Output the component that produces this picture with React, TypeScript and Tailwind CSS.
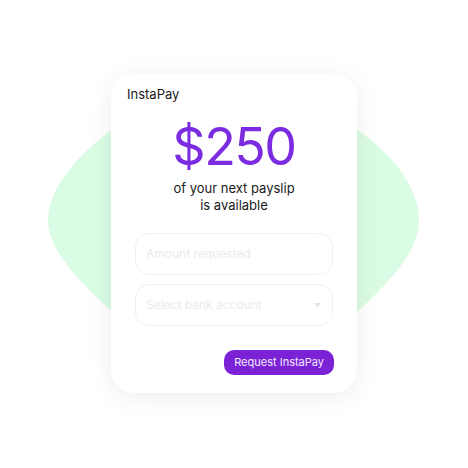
function Blob() {
  return (
    <svg className="absolute inset-0" width="468" height="468" viewBox="0 0 468 468" aria-hidden>
      <path
        d="M110 131 L356 129 C395 155 419 190 419 220 C419 250 392 280 356 313 L110 310 C80 282 48 250 48 220 C48 192 72 160 110 131 Z"
        fill="#dafbe4"
      />
    </svg>
  );
}

function Field({ placeholder, select = false }: { placeholder: string; select?: boolean }) {
  return (
    <div className="flex h-[42px] items-center justify-between rounded-[14px] border border-[#f1f1f1] bg-white pl-[10px] pr-[11px]">
      <span className="text-[12px] text-[#ebebeb]">{placeholder}</span>
      {select ? (
        <svg width="7" height="4" viewBox="0 0 8 5" aria-hidden>
          <path d="M0 0 L8 0 L4 5 Z" fill="#e2e2e2" />
        </svg>
      ) : null}
    </div>
  );
}

export default function App() {
  return (
    <div
      className="relative h-[468px] w-[468px] overflow-hidden bg-white"
      style={{ fontFamily: 'Inter, "Noto Sans", sans-serif' }}
    >
      <Blob />
      <div className="relative flex justify-center pt-[73px]">
        <div className="flex h-[320px] w-[246px] flex-col rounded-[24px] bg-white px-[16px] pt-[11px] shadow-[0_4px_26px_rgba(0,0,0,0.07)]">
          <p className="text-[13px] leading-[20px] text-[#1a1a1a]">InstaPay</p>
          <p className="mt-[17px] text-center text-[52px] leading-none tracking-[-0.03em] text-[#7b2be0]">$250</p>
          <p className="mt-[7px] text-center text-[13px] leading-[17px] text-[#1a1a1a]">
            of your next payslip
            <br />
            is available
          </p>
          <div className="mt-[19px] flex flex-col gap-[9px] px-[8px]">
            <Field placeholder="Amount requested" />
            <Field placeholder="Select bank account" select />
          </div>
          <div className="mt-[24px] flex justify-end pr-[7px]">
            <button className="h-[25px] rounded-[10px] bg-[#7c22d6] px-[10px] text-[11px] text-[#f1e8ff]">
              Request InstaPay
            </button>
          </div>
        </div>
      </div>
    </div>
  );
}
